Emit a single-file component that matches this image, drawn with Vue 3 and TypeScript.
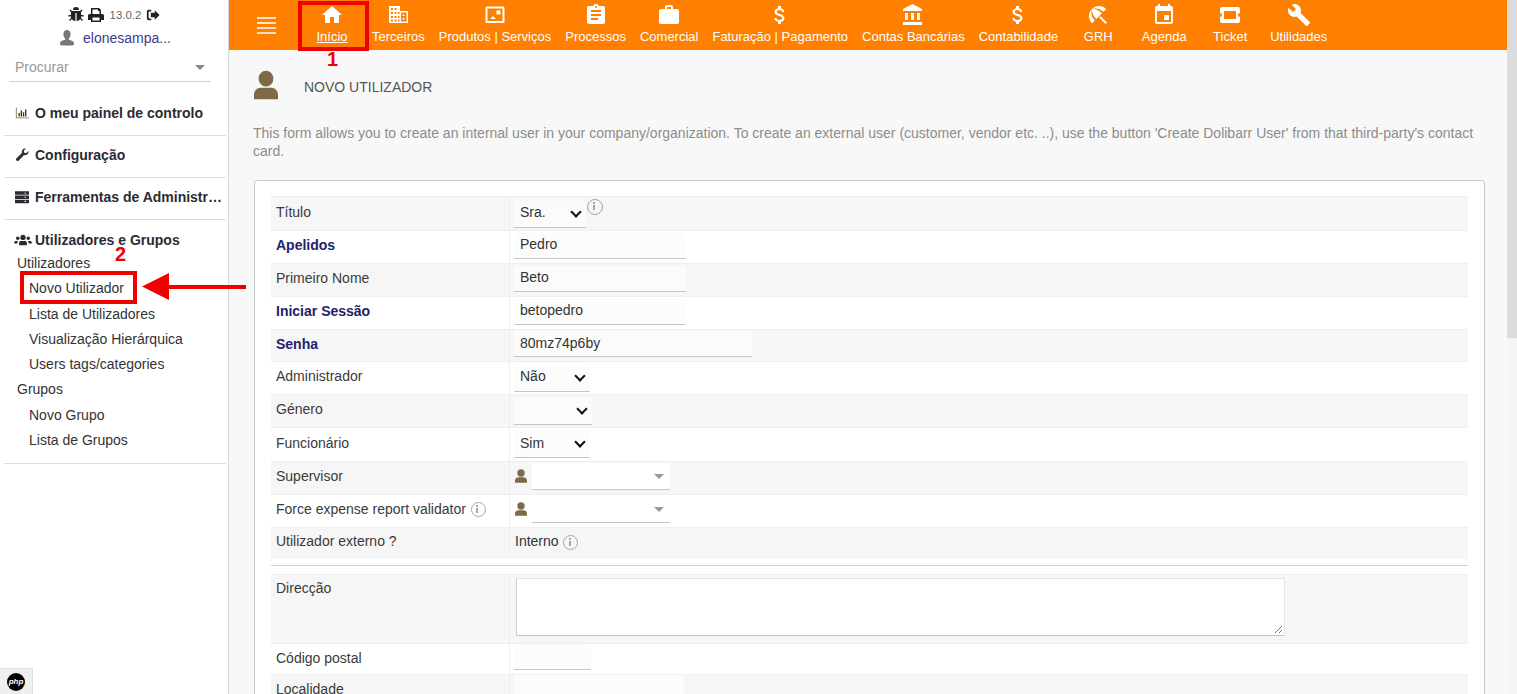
<script setup lang="ts">
interface NavItem { label: string; d: string; active?: boolean }
const money = 'M11.8 10.9c-2.27-.59-3-1.200-3-2.150 0-1.090 1.010-1.850 2.700-1.850 1.780 0 2.440.85 2.500 2.100h2.210c-.07-1.720-1.120-3.300-3.210-3.810V3h-3v2.160c-1.940.42-3.500 1.680-3.500 3.610 0 2.310 1.910 3.460 4.700 4.130 2.500.6 3 1.480 3 2.410 0 .69-.49 1.790-2.700 1.790-2.060 0-2.870-.92-2.980-2.100h-2.200c.12 2.190 1.760 3.420 3.680 3.830V21h3v-2.150c1.950-.37 3.500-1.500 3.500-3.550 0-2.840-2.430-3.810-4.700-4.400z'
const nav: NavItem[] = [
  { label: 'Início', active: true, d: 'M10 20v-6h4v6h5v-8h3L12 3 2 12h3v8z' },
  { label: 'Terceiros', d: 'M3 3h11v5h8v12H3zM5 5v2h2V5zm3.500 0v2h2V5zM5 9v2h2V9zm3.500 0v2h2V9zm3.500 0v2h1.500V9zM5 13v2h2v-2zm3.500 0v2h2v-2zm3.500 0v2h1.500v-2zM5 16.500v2h2v-2zm3.500 0v2h2v-2zm3.500 0v2h1.500v-2zM15 9.500v9h5.500v-9zM16.500 11.500h2v1.500h-2zm0 3.500h2v1.500h-2z' },
  { label: 'Produtos | Serviços', d: 'M4 3.500h16a1.500 1.500 0 0 1 1.500 1.500v13.500A1.500 1.500 0 0 1 20 20H4a1.500 1.500 0 0 1-1.500-1.500V5A1.500 1.500 0 0 1 4 3.500zm.5 2v12.500h15V5.500zM13.500 7.500h4v4h-4zM7 16l3-3 3 3z' },
  { label: 'Processos', d: 'M19 3h-4.180C14.400 1.840 13.300 1 12 1c-1.300 0-2.400.84-2.820 2H5c-1.100 0-2 .9-2 2v14c0 1.100.9 2 2 2h14c1.100 0 2-.9 2-2V5c0-1.100-.9-2-2-2zm-7 0c.55 0 1 .45 1 1s-.45 1-1 1-1-.45-1-1 .45-1 1-1zm2 14H7v-2h7v2zm3-4H7v-2h10v2zm0-4H7V7h10v2z' },
  { label: 'Comercial', d: 'M20 6h-4V4c0-1.110-.89-2-2-2h-4c-1.110 0-2 .89-2 2v2H4c-1.110 0-1.990.89-1.990 2L2 19c0 1.110.89 2 2 2h16c1.110 0 2-.89 2-2V8c0-1.110-.89-2-2-2zm-6 0h-4V4h4v2z' },
  { label: 'Faturação | Pagamento', d: money },
  { label: 'Contas Bancárias', d: 'M4 10v7h3v-7H4zm6 0v7h3v-7h-3zM2 22h19v-3H2v3zm14-12v7h3v-7h-3zm-4.500-9L2 6v2h19V6l-9.500-5z' },
  { label: 'Contabilidade', d: money },
  { label: 'GRH', d: 'M13.127 14.560l1.430-1.430 6.440 6.443L19.570 21zm4.293-5.730l2.860-2.860c-3.950-3.950-10.350-3.960-14.300-.02 3.930-1.300 8.310-.25 11.440 2.880zM5.950 5.980c-3.940 3.950-3.930 10.350.02 14.300l2.860-2.860C5.700 14.290 4.650 9.910 5.950 5.980zm.02-.02l-.01.01c-.38 3.010 1.170 6.880 4.300 10.020l5.730-5.730c-3.130-3.130-7.010-4.680-10.020-4.300z' },
  { label: 'Agenda', d: 'M17 12h-5v5h5v-5zM16 1v2H8V1H6v2H5c-1.110 0-1.990.9-1.990 2L3 19c0 1.100.89 2 2 2h14c1.100 0 2-.9 2-2V5c0-1.100-.9-2-2-2h-1V1h-2zm3 18H5V8h14v11z' },
  { label: 'Ticket', d: 'M22 10V6c0-1.110-.9-2-2-2H4c-1.100 0-1.990.89-1.990 2v4c1.100 0 1.990.9 1.990 2s-.89 2-2 2v4c0 1.100.9 2 2 2h16c1.100 0 2-.9 2-2v-4c-1.100 0-2-.9-2-2s.9-2 2-2zM6 8h12v8H6z' },
  { label: 'Utilidades', d: 'M22.700 19l-9.100-9.100c.9-2.300.4-5-1.500-6.900-2-2-5-2.400-7.400-1.300L9 6 6 9 1.600 4.700C.4 7.100.9 10.100 2.900 12.100c1.900 1.900 4.600 2.400 6.900 1.500l9.100 9.100c.4.400 1 .4 1.400 0l2.300-2.300c.5-.4.5-1.100.1-1.400z' },
]

const userPath = 'M12 2a5.500 5.500 0 1 1 0 11 5.500 5.500 0 0 1 0-11zM3 22v-3c0-3 2.500-5 5-5h8c2.500 0 5 2 5 5v3z'

const subMenu = [
  { text: 'Utilizadores', level: 1 },
  { text: 'Novo Utilizador', level: 2 },
  { text: 'Lista de Utilizadores', level: 2 },
  { text: 'Visualização Hierárquica', level: 2 },
  { text: 'Users tags/categories', level: 2 },
  { text: 'Grupos', level: 1 },
  { text: 'Novo Grupo', level: 2 },
  { text: 'Lista de Grupos', level: 2 },
]
</script>

<template>
  <div class="page">
    <aside class="side">
      <div class="tools">
        <svg class="ic-bug" viewBox="0 0 16 16"><path d="M5 3a3 3 0 0 1 6 0zM4 4h8l1.500-1.500 1 1L13 5v3h2.500v1.400H13v1.500l2 2-1 1-1.800-1.800A4 4 0 0 1 8.600 14V6H7.400v8a4 4 0 0 1-3.600-1.900L2 14l-1-1 2-2V9.400H.5V8H3V5L1.500 3.500l1-1z" /></svg>
        <svg class="ic-print" viewBox="0 0 16 16"><path d="M3 1h8l2 2v4h1.500A1.500 1.500 0 0 1 16 8.500V13h-3v2H3v-2H0V8.500A1.500 1.500 0 0 1 1.500 7H3zm1.500 1.500V7h7V4H10V2.500zM4.500 10.500v3h7v-3z" /></svg>
        <span class="ver">13.0.2</span>
        <svg class="ic-out" viewBox="0 0 16 16"><path d="M6 2v2H3.500A.5.500 0 0 0 3 4.500v7a.5.500 0 0 0 .5.500H6v2H3a2 2 0 0 1-2-2V4a2 2 0 0 1 2-2zM10 2.500l5.500 5.500-5.500 5.500V10.500H5.500v-5H10z" /></svg>
      </div>
      <div class="who">
        <svg class="ic-who" viewBox="0 0 16 16"><path d="M8 0c2.300 0 3.600 1.800 3.600 4.200 0 1.700-.7 3.300-1.700 4.200v1.400c2 .7 5 1.300 5 3.200V15c-2 .8-11.800.8-13.800 0v-2c0-1.900 3-2.500 5-3.200V8.400c-1-.9-1.700-2.500-1.700-4.200C4.400 1.800 5.700 0 8 0z" /></svg>
        <span>elonesampa...</span>
      </div>
      <div class="search">
        <span>Procurar</span>
        <i class="caret"></i>
      </div>

      <section class="block first">
        <h3><svg class="mi" viewBox="0 0 16 16"><path fill="#8a6d3b" d="M1 2h1v11h14v1H1z" /><path d="M4 8h1.500v4H4zm2.500-3H8v7H6.500zM9 7h1.500v5H9zm2.500-3H13v8h-1.500z" /></svg>O meu painel de controlo</h3>
      </section>
      <section class="block">
        <h3><svg class="mi" viewBox="0 0 16 16"><path d="M15.500 4.300a4 4 0 0 1-5.200 3.800L4 14.500a1.800 1.800 0 0 1-2.500-2.500l6.400-6.300A4 4 0 0 1 12.600.6L10 3.200l.5 2.300 2.300.5 2.600-2.600z" /></svg>Configuração</h3>
      </section>
      <section class="block">
        <h3><svg class="mi" viewBox="0 0 16 16"><path d="M0 1.500h16v4H0zm0 4.800h16v4H0zm0 4.800h16v4H0z" /><path fill="#fff" d="M11 3h1.500v1.300H11zm0 4.600h1.500v1.300H11zm0 4.800h1.500v1.300H11z" /></svg><span class="clip">Ferramentas de Administração</span></h3>
      </section>
      <section class="block last">
        <h3><svg class="mi wide" viewBox="0 0 20 16"><circle cx="10" cy="5" r="3" /><circle cx="4" cy="6" r="2" /><circle cx="16" cy="6" r="2" /><path d="M5.500 14v-2.500C5.500 9.500 7 9 8 9h4c1 0 2.500.5 2.500 2.500V14zM0 12v-1.500C0 9.500 1 9 2 9h2.500c-.5.600-1 1.500-1 3zm20 0v-1.500c0-1-1-1.500-2-1.500h-2.500c.5.600 1 1.500 1 3z" /></svg>Utilizadores e Grupos</h3>
        <ul>
          <li v-for="m in subMenu" :key="m.text" :class="'lv' + m.level">{{ m.text }}</li>
        </ul>
      </section>

      <div class="php"><span>php</span></div>
    </aside>

    <div class="main">
      <header class="top">
        <div class="burger"><i></i><i></i><i></i><i></i></div>
        <a v-for="n in nav" :key="n.label" class="tab" :class="{ on: n.active }">
          <svg viewBox="0 0 24 24"><path fill-rule="evenodd" :d="n.d" /></svg>
          <span>{{ n.label }}</span>
        </a>
      </header>

      <main class="body">
        <div class="title">
          <svg viewBox="0 0 24 24" preserveAspectRatio="none"><path :d="userPath" /></svg>
          <span>NOVO UTILIZADOR</span>
        </div>
        <p class="desc">This form allows you to create an internal user in your company/organization. To create an external user (customer, vendor etc. ..), use the button 'Create Dolibarr User' from that third-party's contact card.</p>

        <div class="card">
          <table class="form">
            <tbody>
              <tr class="r34"><td>Título</td><td><span class="sel w72">Sra.<b class="chev"></b></span><span class="info up"></span></td></tr>
              <tr class="r33"><td class="req">Apelidos</td><td><span class="inp w172">Pedro</span></td></tr>
              <tr class="r33"><td>Primeiro Nome</td><td><span class="inp w172">Beto</span></td></tr>
              <tr class="r33"><td class="req">Iniciar Sessão</td><td><span class="inp w172">betopedro</span></td></tr>
              <tr class="r32"><td class="req">Senha</td><td><span class="inp w238">80mz74p6by</span></td></tr>
              <tr class="r33"><td>Administrador</td><td><span class="sel w76">Não<b class="chev"></b></span></td></tr>
              <tr class="r33"><td>Género</td><td><span class="sel w78"><b class="chev"></b></span></td></tr>
              <tr class="r34"><td>Funcionário</td><td><span class="sel w76">Sim<b class="chev"></b></span></td></tr>
              <tr class="r33"><td>Supervisor</td><td class="userpick"><svg viewBox="0 0 24 24"><path :d="userPath" /></svg><span class="combo"><i class="caret"></i></span></td></tr>
              <tr class="r33"><td>Force expense report validator <span class="info"></span></td><td class="userpick"><svg viewBox="0 0 24 24"><path :d="userPath" /></svg><span class="combo"><i class="caret"></i></span></td></tr>
              <tr class="r31"><td>Utilizador externo ?</td><td class="plain">Interno <span class="info"></span></td></tr>
            </tbody>
          </table>
          <hr class="sep" />
          <table class="form">
            <tbody>
              <tr class="r69"><td class="topcell">Direcção</td><td class="topcell"><span class="area"><svg viewBox="0 0 10 10"><path d="M9 2L2 9M9 6L6 9" /></svg></span></td></tr>
              <tr class="r31"><td>Código postal</td><td><span class="inp w80"></span></td></tr>
              <tr class="r31"><td>Localidade</td><td><span class="inp w170"></span></td></tr>
            </tbody>
          </table>
        </div>
      </main>
    </div>

    <div class="scroll"><div class="thumb"></div></div>

    <!-- tutorial annotations drawn over the page -->
    <div class="mark box1"></div>
    <div class="mark num n1">1</div>
    <div class="mark num n2">2</div>
    <div class="mark box2"></div>
    <svg class="mark arrow" viewBox="0 0 104 30"><path d="M104 14v4H25v-4z" /><path d="M0 15.500 27 2v27z" /></svg>
  </div>
</template>

<style>
html, body { margin: 0; overflow: hidden; background: #fff; }
</style>

<style scoped>
.page { position: relative; display: flex; width: 1517px; height: 694px; overflow: hidden; font-family: "Liberation Sans", Arial, sans-serif; font-size: 14px; color: #444; }

/* sidebar */
.side { position: relative; flex: 0 0 229px; box-sizing: border-box; height: 694px; padding-top: 7px; background: #fff; border-right: 1px solid #d8d8d8; }
.tools { display: flex; align-items: center; justify-content: center; height: 16px; color: #222; }
.tools svg { fill: #222; }
.ic-bug { width: 16px; height: 16px; }
.ic-print { width: 16px; height: 16px; margin-left: 4px; }
.ver { margin: 0 5px 0 6px; font-size: 11.500px; color: #666; }
.ic-out { width: 14px; height: 14px; }
.who { display: flex; align-items: center; justify-content: center; height: 16px; margin-top: 7px; padding-left: 2px; color: #3b3b8f; font-size: 14px; }
.ic-who { width: 16px; height: 16px; margin-right: 8px; fill: #777; }
.search { display: flex; align-items: center; justify-content: space-between; box-sizing: border-box; width: 202px; height: 29px; margin: 7px 0 0 9px; padding: 0 6px; border-bottom: 1px solid #d0d0d0; color: #999; }
.caret { display: block; width: 0; height: 0; border-left: 5px solid transparent; border-right: 5px solid transparent; border-top: 5px solid #888; }
.block { box-sizing: border-box; margin: 0 2px 0 4px; height: 42px; border-bottom: 1px solid #dcdcdc; color: #222; }
.block.first { margin-top: 21px; height: 33px; }
.block.last { height: 244px; }
h3 { display: flex; align-items: center; height: 16px; margin: 0; padding: 11px 0 0 11px; font-size: 14px; font-weight: 700; white-space: nowrap; color: #2b2b33; }
.block.first h3 { padding-top: 2px; }
.block.last h3 { padding-top: 12px; }
.mi { flex: none; width: 14px; height: 14px; margin: 0 6px 0 0; fill: #2b2b33; }
.mi.wide { width: 20px; margin-left: -2px; margin-right: 2px; }
.clip { display: block; overflow: hidden; text-overflow: ellipsis; width: 188px; }
ul { margin: 3px 0 0; padding: 0; list-style: none; }
li { height: 25.300px; line-height: 25.300px; font-weight: 400; color: #333; white-space: nowrap; }
.lv1 { padding-left: 13px; }
.lv2 { padding-left: 25px; }
.php { position: absolute; left: 0; bottom: 0; display: flex; align-items: center; justify-content: center; width: 33px; height: 26px; background: #efefef; border: 1px solid #dedede; border-width: 1px 1px 0 0; box-sizing: border-box; }
.php span { display: block; width: 18px; height: 18px; border-radius: 50%; background: #000; color: #fff; font: italic 700 8px/18px "Liberation Sans", sans-serif; text-align: center; }

/* top bar */
.main { flex: 1 1 auto; min-width: 0; background: #f8f8f8; }
.top { display: flex; height: 50px; background: #ff8000; color: #fff; }
.burger { display: flex; flex: 0 0 70px; flex-direction: column; justify-content: center; gap: 3px; box-sizing: border-box; padding: 0 23px 0 28px; }
.burger i { display: block; height: 2px; background: #ffe3c4; }
.tab { display: flex; flex-direction: column; align-items: center; box-sizing: border-box; min-width: 66px; padding: 3px 7px 0; font-size: 13px; color: #fff; white-space: nowrap; }
.tab svg { display: block; width: 24px; height: 24px; fill: #fff; }
.tab span { display: block; margin-top: 2px; line-height: 16px; }
.tab.on span { text-decoration: underline; }

/* body */
.body { padding: 22px 32px 0 25px; }
.title { display: flex; align-items: center; height: 30px; }
.title svg { width: 32px; height: 34px; margin-left: -4px; transform: translateY(-2px); fill: #7d6a47; }
.title span { margin-left: 22px; font-size: 14px; color: #555; }
.desc { margin: 22px 0 0 -1px; line-height: 18px; font-size: 14px; color: #8c8c8c; }
.card { box-sizing: border-box; height: 600px; margin-top: 20px; padding: 15px 16px 0; background: #fff; border: 1px solid #c9c9c9; border-radius: 3px; }
.form { width: 100%; table-layout: fixed; border-collapse: collapse; font-size: 14px; color: #3a3a3a; }
.form tr:nth-child(odd) { background: #f6f6f6; }
.form td { padding: 0 0 0 4px; border-top: 1px solid #efefef; white-space: nowrap; vertical-align: middle; }
.form td:first-child { width: 233px; padding-left: 5px; padding-bottom: 4px; border-right: 1px solid #efefef; }
.sep + .form .r31 td:first-child { padding-bottom: 2px; }
.form td.plain { padding-left: 5px; padding-bottom: 4px; }
.r31 { height: 31px; } .r32 { height: 32px; } .r33 { height: 33px; } .r34 { height: 34px; } .r69 { height: 69px; }
.req { font-weight: 700; color: #22226b; }
.sel, .inp { display: inline-flex; align-items: center; box-sizing: border-box; padding-left: 6px; padding-bottom: 2px; background: #fbfbfb; border-bottom: 1px solid #c6c6c6; color: #333; vertical-align: middle; }
.inp { height: 26px; margin-bottom: 3px; }
.sel { position: relative; height: 27px; padding-bottom: 3px; }
.chev { position: absolute; right: 6px; top: 7px; width: 6px; height: 6px; border: solid #111; border-width: 0 2px 2px 0; transform: rotate(45deg); }
.w72 { width: 72px; } .w76 { width: 76px; } .w78 { width: 78px; } .w172 { width: 172px; } .w238 { width: 238px; } .w80 { width: 77px; } .w170 { width: 170px; }
.form tr:nth-child(even) .sel, .form tr:nth-child(even) .inp { background: #fcfcfc; }
.info { display: inline-block; box-sizing: border-box; width: 15px; height: 15px; margin-left: 1px; border: 1.500px solid #a5a5a5; border-radius: 50%; vertical-align: middle; position: relative; }
.info::before { content: ""; position: absolute; left: 4.500px; top: 5px; width: 2px; height: 5px; background: #a5a5a5; }
.info::after { content: ""; position: absolute; left: 4.500px; top: 2px; width: 2px; height: 2px; background: #a5a5a5; }
.info.up { width: 16px; height: 16px; margin-left: 1px; vertical-align: 3px; }
.userpick svg { display: inline-block; width: 16px; height: 16px; margin: -5px 0 0 -1px; fill: #7d6a47; vertical-align: middle; }
.combo { display: inline-flex; align-items: center; justify-content: flex-end; box-sizing: border-box; width: 138px; height: 27px; margin: 0 0 3px 3px; padding-right: 6px; background: #fff; border-bottom: 1px solid #c6c6c6; vertical-align: middle; }
.combo .caret { border-top-color: #999; }
.plain { color: #333; }
.sep { height: 1px; margin: 6px 0 8px; border: 0; background: #cfcfcf; }
.form td.topcell { vertical-align: top; padding-top: 3px; padding-bottom: 0; }
.form td.topcell:first-child { padding-top: 5px; }
.area { position: relative; display: block; box-sizing: border-box; width: 769px; height: 58px; margin-left: 2px; background: #fff; border: 1px solid #e4e4e4; border-bottom-color: #c6c6c6; border-left-color: #cfcfcf; }
.area svg { position: absolute; right: 1px; bottom: 1px; width: 10px; height: 10px; fill: none; stroke: #777; stroke-width: 1; }

/* scrollbar */
.scroll { position: absolute; top: 0; right: 0; width: 10px; height: 694px; background: #f5f5f5; }
.thumb { height: 338px; background: #dcdcdc; }

/* annotations */
.mark { position: absolute; }
.box1 { left: 298px; top: 1px; box-sizing: border-box; width: 71px; height: 50px; border: 4px solid #f00000; }
.box2 { left: 20px; top: 271px; box-sizing: border-box; width: 117px; height: 33px; border: 4px solid #f00000; }
.num { font-size: 20px; font-weight: 700; line-height: 20px; color: #f00000; }
.n1 { left: 327px; top: 49px; }
.n2 { left: 115px; top: 244px; }
.arrow { left: 142px; top: 271px; width: 104px; height: 30px; fill: #f00000; }
</style>
